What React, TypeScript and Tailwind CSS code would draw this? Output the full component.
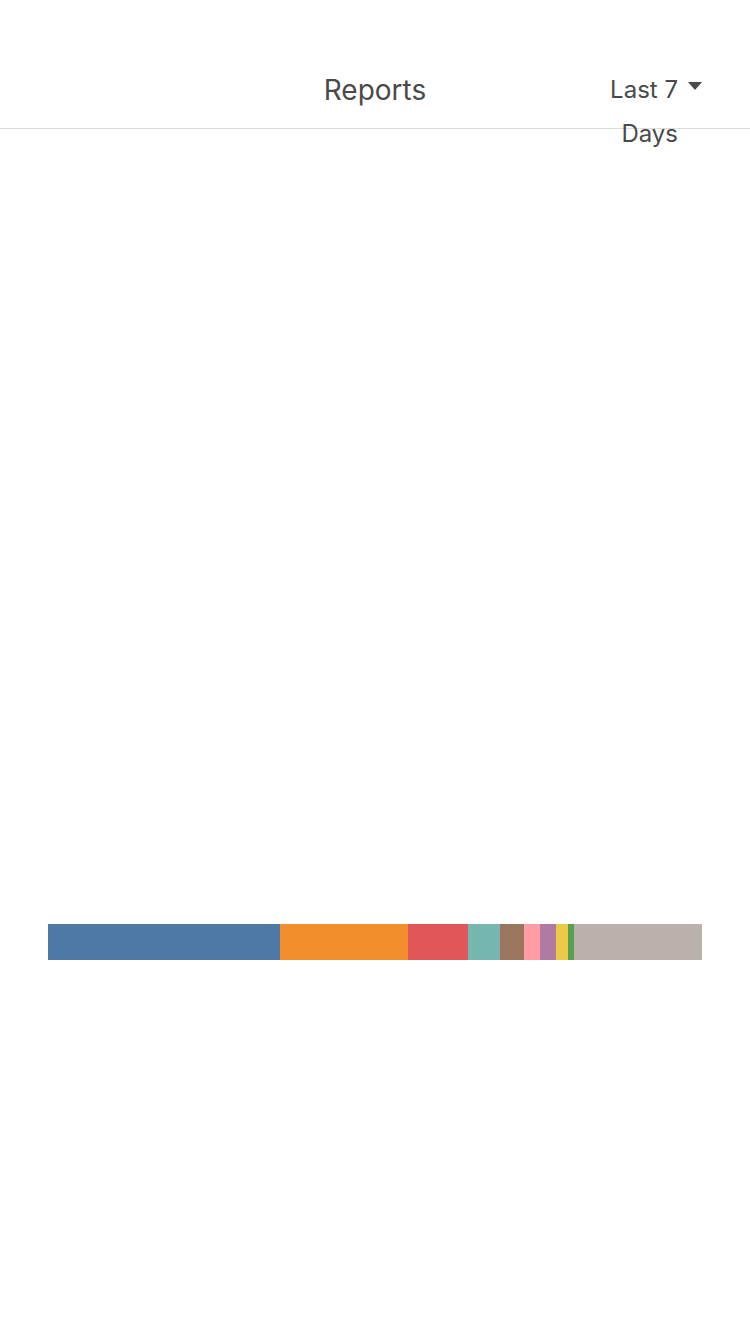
import React from 'react';

const segments = [
    { color: '#4e79a7', width: 232 },
    { color: '#f28e2b', width: 128 },
    { color: '#e15759', width: 60 },
    { color: '#76b7b2', width: 32 },
    { color: '#9c755f', width: 24 },
    { color: '#ff9da7', width: 16 },
    { color: '#b07aa1', width: 16 },
    { color: '#edc948', width: 12 },
    { color: '#59a14f', width: 6 },
    { color: '#bab0ac', width: 128 },
];

export default function App() {
    return (
        <div className="w-[750px] h-[1334px] bg-white text-[#4a4a4a]" style={{ fontFamily: 'Inter, "Liberation Sans", sans-serif' }}>
            <header className="relative h-[129px] border-b border-[#dcdcdc]">
                <div className="absolute left-0 right-0 top-[72px] text-center text-[28px] leading-[36px]">Reports</div>
                <div className="absolute right-[48px] top-[70px] flex items-start gap-[10px]">
                    <div className="w-[76px] text-right text-[24px] leading-[44px] -mt-[2px]">Last 7 Days</div>
                    <svg width="14" height="8" viewBox="0 0 14 8" className="mt-[12px]">
                        <polygon points="0,0 14,0 7,8" fill="#4a4a4a" />
                    </svg>
                </div>
            </header>
            <main className="px-[48px] pt-[795px]">
                <div className="flex h-[36px] w-[654px]">
                    {segments.map((s, i) => (
                        <div key={i} className="h-full shrink-0" style={{ width: s.width, backgroundColor: s.color }} />
                    ))}
                </div>
            </main>
        </div>
    );
}
